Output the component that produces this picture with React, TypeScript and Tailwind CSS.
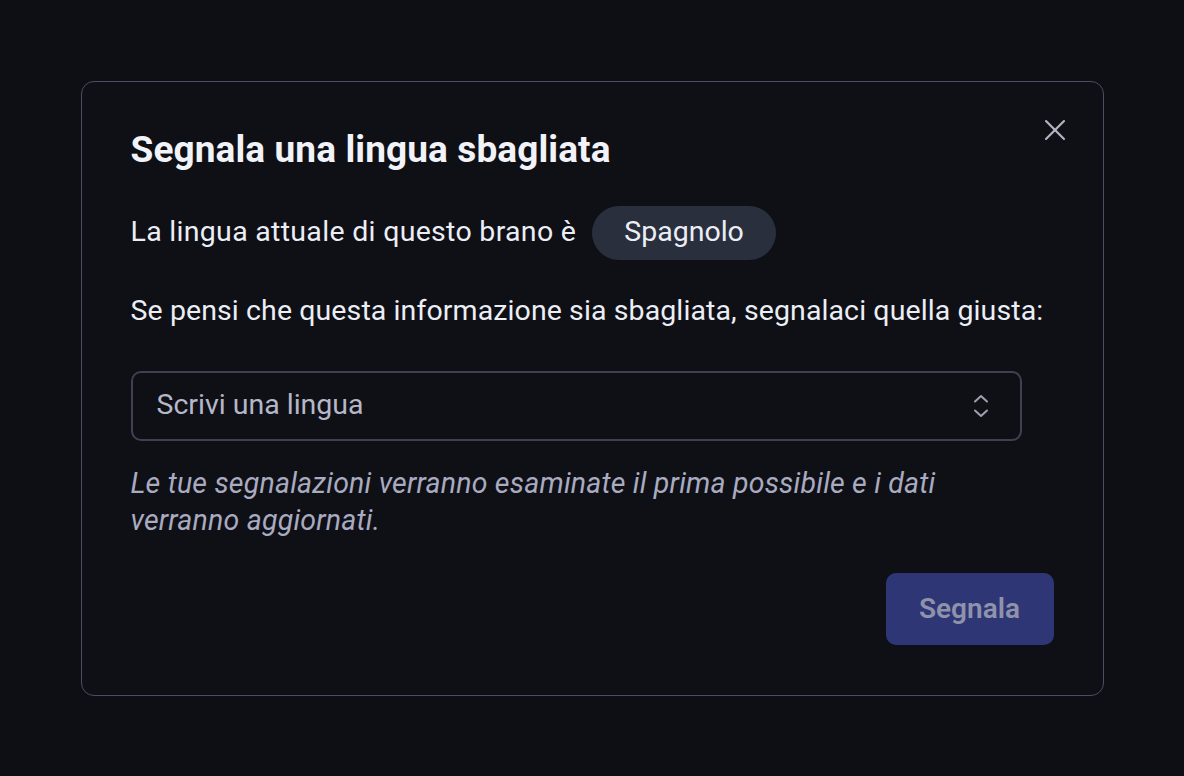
import { X } from 'lucide-react';

export default function App() {
  return (
    <div
      className="min-h-screen w-full bg-[#0e0f14] flex items-center justify-center"
      style={{ fontFamily: 'Roboto, "Noto Sans", sans-serif' }}
    >
      <div className="relative w-[1023px] h-[615px] rounded-[13px] border-[1.5px] border-[#4b4d61] bg-[#0f1016] px-[49px] pt-[46px]">
        {/* chiudi */}
        <button className="absolute right-[30px] top-[30px] text-[#b4b6c4]">
          <X className="w-[36px] h-[36px]" strokeWidth={1.4} />
        </button>

        <h2 className="text-[37px] leading-[44px] font-bold text-[#f2f3f8] tracking-[0.1px]">
          Segnala una lingua sbagliata
        </h2>

        <div className="mt-[34px] flex items-center gap-[16px] text-[28.5px] text-[#eceef5]">
          <span className="tracking-[0.3px]">La lingua attuale di questo brano è</span>
          <span className="h-[54px] px-[32px] rounded-full bg-[#2a2f3d] flex items-center">
            Spagnolo
          </span>
        </div>

        <p className="mt-[33px] text-[28.5px] leading-[36px] text-[#eceef5] tracking-[0.1px]">
          Se pensi che questa informazione sia sbagliata, segnalaci quella giusta:
        </p>

        <div className="mt-[42px] w-[891px] h-[70px] rounded-[10px] border-2 border-[#3f4152] flex items-center justify-between pl-[24px] pr-[31px]">
          <span className="text-[28.5px] text-[#b6b8c9]">Scrivi una lingua</span>
          <svg width="16" height="26" viewBox="0 0 16 26" fill="none" stroke="#9ea0b2" strokeWidth="2" strokeLinecap="round" strokeLinejoin="round">
            <path d="M2 8.5 L8 3 L14 8.5" />
            <path d="M2 17.5 L8 23 L14 17.5" />
          </svg>
        </div>

        <p className="mt-[24px] w-[860px] text-[28.5px] leading-[37px] italic text-[#a9abc0] tracking-[0.2px]">
          Le tue segnalazioni verranno esaminate il prima possibile e i dati verranno aggiornati.
        </p>

        <div className="mt-[34px] flex justify-end">
          <button className="w-[168px] h-[72px] rounded-[10px] bg-[#2f3675] text-[28px] font-semibold text-[#8e92aa]">
            Segnala
          </button>
        </div>
      </div>
    </div>
  );
}
